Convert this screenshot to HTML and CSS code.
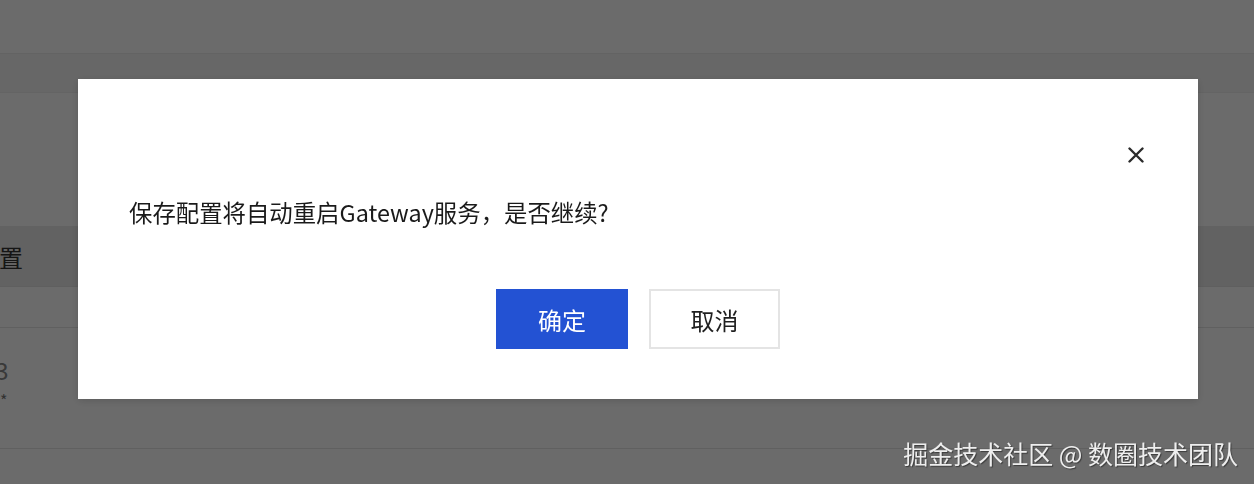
FILE: index.html
```html
<!DOCTYPE html>
<html>
	<head>
		<meta charset="utf-8">
		<title>配置</title>
		<link rel="stylesheet" href="styles.css">
	</head>
	<body>
		<div id="page">
			<div id="header"></div>
			<div id="sub-bar"></div>
			<div id="section">
				<div class="table">
					<div class="table-head">
						<span class="head-label">配置</span>
					</div>
					<div class="table-row row-empty"></div>
					<div class="table-row row-value">
						<span class="value-text">13</span>
						<span class="value-note">*</span>
					</div>
				</div>
			</div>
		</div>

		<div id="mask"></div>

		<div id="dialog">
			<div class="dialog-header">
				<button type="button" class="dialog-close" aria-label="关闭">
					<svg width="16" height="16" viewBox="0 0 16 16">
						<path d="M1.5 1.5 L14.5 14.5 M14.5 1.5 L1.5 14.5" stroke="#2b2b2b" stroke-width="2.4" stroke-linecap="round" fill="none"/>
					</svg>
				</button>
			</div>
			<div class="dialog-body">
				保存配置将自动重启Gateway服务，是否继续?
			</div>
			<div class="dialog-footer">
				<button type="button" class="btn btn-primary">确定</button>
				<button type="button" class="btn btn-default">取消</button>
			</div>
		</div>

		<div id="watermark">掘金技术社区 @ 数圈技术团队</div>
	</body>
</html>
```

FILE: styles.css
```css
html {
	height: 100%;
}

body {
	margin: 0;
	height: 100%;
	overflow: hidden;
	background-color: #ffffff;
	font-family: "Noto Sans CJK SC", "Noto Sans", sans-serif;
	color: #1f1f1f;
}

/* ---背景のページ--- */
#page {
	height: 100%;
	display: flex;
	flex-direction: column;
}

#header {
	height: 54px;
	border-bottom: 1px solid #ececec;
	box-sizing: border-box;
	background-color: #ffffff;
}

#sub-bar {
	height: 38px;
	background-color: #f5f5f5;
	border-bottom: 1px solid #eeeeee;
}

#section {
	flex: 1;
	padding-top: 133px;
}

.table {
	margin-left: -25px;
}

.table-head {
	height: 60px;
	background-color: #e9e9e9;
	border-bottom: 1px solid #e2e2e2;
	display: flex;
	align-items: center;
}

.head-label {
	font-size: 24px;
	color: #333333;
}

.table-row {
	border-bottom: 1px solid #e4e4e4;
}

.row-empty {
	height: 40px;
}

.row-value {
	height: 121px;
	display: flex;
	flex-direction: column;
	padding-top: 26px;
	box-sizing: border-box;
}

.value-text {
	font-size: 24px;
	line-height: 32px;
	color: #888888;
	padding-left: 7px;
}

.value-note {
	font-size: 16px;
	line-height: 20px;
	color: #777777;
	padding-left: 25px;
	margin-top: 4px;
}

/* ---マスク--- */
#mask {
	position: fixed;
	top: 0;
	left: 0;
	right: 0;
	bottom: 0;
	background-color: rgba(0, 0, 0, 0.58);
}

/* ---ダイアログ--- */
#dialog {
	position: fixed;
	top: 79px;
	left: 78px;
	width: 1120px;
	height: 320px;
	box-sizing: border-box;
	padding: 68px 54px 50px 51px;
	background-color: #ffffff;
	box-shadow: 0 2px 8px rgba(0, 0, 0, 0.15);
	display: flex;
	flex-direction: column;
}

.dialog-header {
	height: 16px;
	display: flex;
	justify-content: flex-end;
}

.dialog-close {
	width: 16px;
	height: 16px;
	padding: 0;
	border: none;
	background: none;
	display: flex;
}

.dialog-body {
	margin-top: 32px;
	font-size: 23.4px;
	line-height: 34px;
	color: #1a1a1a;
}

.dialog-footer {
	margin-top: 60px;
	padding-left: 3px;
	display: flex;
	justify-content: center;
	gap: 21px;
}

.btn {
	width: 132px;
	height: 60px;
	font-family: "Noto Sans CJK SC", "Noto Sans", sans-serif;
	font-size: 24px;
	padding: 0;
	box-sizing: border-box;
}

.btn-primary {
	background-color: #2352d3;
	border: none;
	color: #ffffff;
}

.btn-default {
	width: 131px;
	background-color: #ffffff;
	border: 2px solid #e4e4e4;
	color: #1f1f1f;
}

/* ---透かし--- */
#watermark {
	position: fixed;
	right: 16px;
	bottom: 14px;
	font-size: 25px;
	line-height: 34px;
	color: #eeeeee;
	text-shadow: 1px 1px 1px rgba(0, 0, 0, 0.45);
}
```
